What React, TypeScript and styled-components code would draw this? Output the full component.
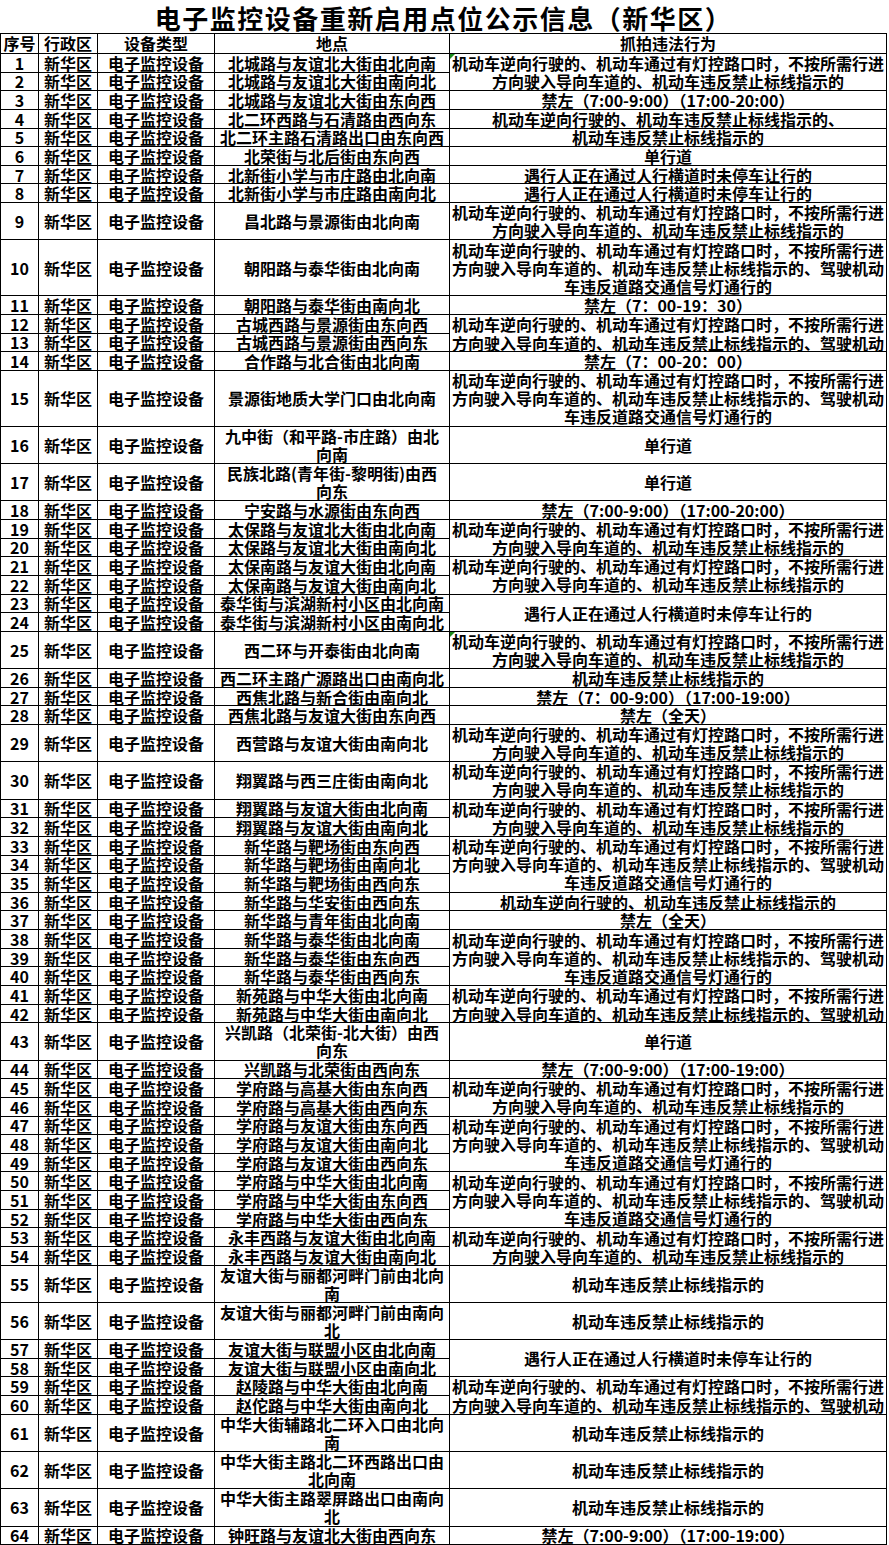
import React from "react";
import styled, { createGlobalStyle, css } from "styled-components";

const Global = createGlobalStyle`
  html, body { margin: 0; padding: 0; background: #fff; }
  body { font-family: "Noto Sans CJK SC", "Noto Sans", sans-serif; color: #000; }
`;

const UNIT = 18.65;

const Page = styled.div`
  width: 889px;
  background: #fff;
`;

const Title = styled.h1`
  margin: 0;
  height: 33px;
  box-sizing: border-box;
  padding-top: 5px;
  font-size: 26px;
  line-height: 26px;
  font-weight: 700;
  letter-spacing: 1.5px;
  text-align: center;
  width: 887px;
`;

const Table = styled.div`
  display: grid;
  width: 887px;
  box-sizing: border-box;
  grid-template-columns: 38px 59px 117px 235px 437px;
  grid-template-rows: 20px;
  grid-auto-rows: ${UNIT}px;
  border-left: 1px solid #000;
  border-top: 1px solid #000;
`;

const Cell = styled.div<{ $col: number; $span?: number; $clip?: boolean; $mark?: boolean; $pre?: boolean }>`
  grid-column: ${(p) => p.$col};
  grid-row: span ${(p) => p.$span ?? 1};
  position: relative;
  box-sizing: border-box;
  border-right: 1px solid #000;
  border-bottom: 1px solid #000;
  display: flex;
  align-items: ${(p) => (p.$clip ? "flex-start" : "center")};
  justify-content: center;
  text-align: center;
  overflow: hidden;
  font-size: 16px;
  line-height: ${(p) => (p.$clip ? `${UNIT}px` : "18px")};
  font-weight: 700;
  white-space: ${(p) => (p.$pre ? "pre-line" : "normal")};
  ${(p) =>
    p.$mark &&
    css`
      &::before {
        content: "";
        position: absolute;
        left: 0;
        top: 0;
        border-top: 5px solid #1a8a1a;
        border-right: 5px solid transparent;
      }
    `}
`;

const HeadCell = styled(Cell)`
  line-height: 19px;
`;

const A =
  "机动车逆向行驶的、机动车通过有灯控路口时，不按所需行进方向驶入导向车道的、机动车违反禁止标线指示的";
const B = A + "、驾驶机动车违反道路交通信号灯通行的";
const C = "机动车违反禁止标线指示的";
const D = "遇行人正在通过人行横道时未停车让行的";
const E = "单行道";
const F = "机动车逆向行驶的、机动车违反禁止标线指示的";
const L20 = "禁左（7:00-9:00）（17:00-20:00）";
const L19 = "禁左（7:00-9:00）（17:00-19:00）";
const ALL = "禁左（全天）";

const locations: string[] = [
  "北城路与友谊北大街由北向南",
  "北城路与友谊北大街由南向北",
  "北城路与友谊北大街由东向西",
  "北二环西路与石清路由西向东",
  "北二环主路石清路出口由东向西",
  "北荣街与北后街由东向西",
  "北新街小学与市庄路由北向南",
  "北新街小学与市庄路由南向北",
  "昌北路与景源街由北向南",
  "朝阳路与泰华街由北向南",
  "朝阳路与泰华街由南向北",
  "古城西路与景源街由东向西",
  "古城西路与景源街由西向东",
  "合作路与北合街由北向南",
  "景源街地质大学门口由北向南",
  "九中街（和平路-市庄路）由北\n向南",
  "民族北路(青年街-黎明街)由西\n向东",
  "宁安路与水源街由东向西",
  "太保路与友谊北大街由北向南",
  "太保路与友谊北大街由南向北",
  "太保南路与友谊大街由北向南",
  "太保南路与友谊大街由南向北",
  "泰华街与滨湖新村小区由北向南",
  "泰华街与滨湖新村小区由南向北",
  "西二环与开泰街由北向南",
  "西二环主路广源路出口由南向北",
  "西焦北路与新合街由南向北",
  "西焦北路与友谊大街由东向西",
  "西营路与友谊大街由南向北",
  "翔翼路与西三庄街由南向北",
  "翔翼路与友谊大街由北向南",
  "翔翼路与友谊大街由南向北",
  "新华路与靶场街由东向西",
  "新华路与靶场街由南向北",
  "新华路与靶场街由西向东",
  "新华路与华安街由西向东",
  "新华路与青年街由北向南",
  "新华路与泰华街由北向南",
  "新华路与泰华街由东向西",
  "新华路与泰华街由西向东",
  "新苑路与中华大街由北向南",
  "新苑路与中华大街由南向北",
  "兴凯路（北荣街-北大街）由西\n向东",
  "兴凯路与北荣街由西向东",
  "学府路与高基大街由东向西",
  "学府路与高基大街由西向东",
  "学府路与友谊大街由东向西",
  "学府路与友谊大街由南向北",
  "学府路与友谊大街由西向东",
  "学府路与中华大街由北向南",
  "学府路与中华大街由东向西",
  "学府路与中华大街由西向东",
  "永丰西路与友谊大街由北向南",
  "永丰西路与友谊大街由南向北",
  "友谊大街与丽都河畔门前由北向\n南",
  "友谊大街与丽都河畔门前由南向\n北",
  "友谊大街与联盟小区由北向南",
  "友谊大街与联盟小区由南向北",
  "赵陵路与中华大街由北向南",
  "赵佗路与中华大街由南向北",
  "中华大街辅路北二环入口由北向\n南",
  "中华大街主路北二环西路出口由\n北向南",
  "中华大街主路翠屏路出口由南向\n北",
  "钟旺路与友谊北大街由西向东",
];

const tallRows: Record<number, number> = {
  9: 2, 10: 3, 15: 3, 16: 2, 17: 2, 25: 2, 29: 2, 30: 2, 43: 2, 55: 2, 56: 2, 61: 2, 62: 2, 63: 2,
};

type Group = { rows: number; text: string; clip?: boolean; mark?: boolean };

const groups: Group[] = [
  { rows: 2, text: A, mark: true },
  { rows: 1, text: L20 },
  { rows: 1, text: F + "、" },
  { rows: 1, text: C },
  { rows: 1, text: E },
  { rows: 1, text: D },
  { rows: 1, text: D },
  { rows: 1, text: A },
  { rows: 1, text: B },
  { rows: 1, text: "禁左（7：00-19：30）" },
  { rows: 2, text: B, clip: true },
  { rows: 1, text: "禁左（7：00-20：00）" },
  { rows: 1, text: B },
  { rows: 1, text: E },
  { rows: 1, text: E },
  { rows: 1, text: L20 },
  { rows: 2, text: A },
  { rows: 2, text: A },
  { rows: 2, text: D },
  { rows: 1, text: A, mark: true },
  { rows: 1, text: C },
  { rows: 1, text: "禁左（7：00-9:00）（17:00-19:00）" },
  { rows: 1, text: ALL },
  { rows: 1, text: A },
  { rows: 1, text: A },
  { rows: 2, text: A },
  { rows: 3, text: B },
  { rows: 1, text: F },
  { rows: 1, text: ALL },
  { rows: 3, text: B },
  { rows: 2, text: B, clip: true },
  { rows: 1, text: E },
  { rows: 1, text: L19 },
  { rows: 2, text: A },
  { rows: 3, text: B },
  { rows: 3, text: B },
  { rows: 2, text: A },
  { rows: 1, text: C },
  { rows: 1, text: C },
  { rows: 2, text: D },
  { rows: 2, text: B, clip: true },
  { rows: 1, text: C },
  { rows: 1, text: C },
  { rows: 1, text: C },
  { rows: 1, text: L19 },
];

const unitsOf = (n: number) => tallRows[n] ?? 1;

// map: starting row number -> group with computed span
const groupStarts: Record<number, Group & { span: number }> = {};
{
  let r = 1;
  for (const g of groups) {
    let span = 0;
    for (let i = 0; i < g.rows; i++) span += unitsOf(r + i);
    groupStarts[r] = { ...g, span };
    r += g.rows;
  }
}

export default function App() {
  return (
    <Page>
      <Global />
      <Title>电子监控设备重新启用点位公示信息（新华区）</Title>
      <Table>
        <HeadCell $col={1}>序号</HeadCell>
        <HeadCell $col={2}>行政区</HeadCell>
        <HeadCell $col={3}>设备类型</HeadCell>
        <HeadCell $col={4}>地点</HeadCell>
        <HeadCell $col={5}>抓拍违法行为</HeadCell>
        {locations.map((loc, i) => {
          const n = i + 1;
          const u = unitsOf(n);
          const g = groupStarts[n];
          return (
            <React.Fragment key={n}>
              <Cell $col={1} $span={u}>{n}</Cell>
              <Cell $col={2} $span={u}>新华区</Cell>
              <Cell $col={3} $span={u}>电子监控设备</Cell>
              <Cell $col={4} $span={u} $pre>{loc}</Cell>
              {g && (
                <Cell $col={5} $span={g.span} $clip={g.clip} $mark={g.mark}>
                  {g.text}
                </Cell>
              )}
            </React.Fragment>
          );
        })}
      </Table>
    </Page>
  );
}
